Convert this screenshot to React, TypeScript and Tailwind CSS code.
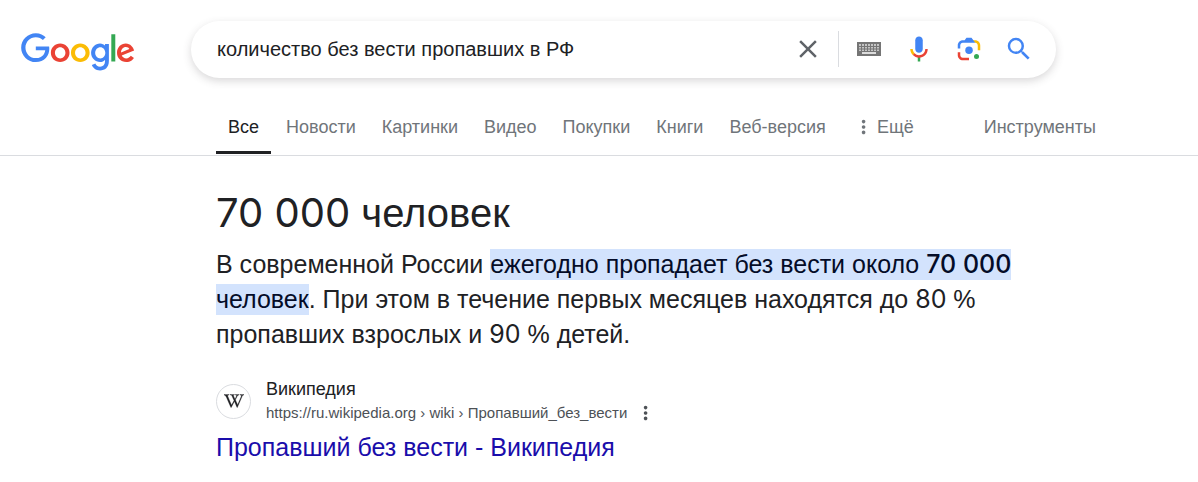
import { useState } from "react";
import type { ReactNode } from "react";
import { FaWikipediaW } from "react-icons/fa";

function GoogleLogo() {
  return (
    <svg viewBox="0 0 272 92" className="block w-[114px]" aria-hidden="true">
      <path fill="#EA4335" d="M115.75 47.18c0 12.77-9.99 22.18-22.25 22.18s-22.25-9.41-22.25-22.18C71.25 34.32 81.24 25 93.5 25s22.25 9.32 22.25 22.18zm-9.74 0c0-7.98-5.79-13.44-12.51-13.44S80.99 39.2 80.99 47.18c0 7.9 5.79 13.44 12.51 13.44s12.51-5.55 12.51-13.44z" />
      <path fill="#FBBC05" d="M163.75 47.18c0 12.77-9.99 22.18-22.25 22.18s-22.25-9.41-22.25-22.18c0-12.85 9.99-22.18 22.25-22.18s22.25 9.32 22.25 22.18zm-9.74 0c0-7.98-5.79-13.44-12.51-13.44s-12.51 5.46-12.51 13.44c0 7.9 5.79 13.44 12.51 13.44s12.51-5.55 12.51-13.44z" />
      <path fill="#4285F4" d="M209.75 26.34v39.82c0 16.38-9.66 23.07-21.08 23.07-10.75 0-17.22-7.19-19.66-13.07l8.48-3.53c1.51 3.61 5.21 7.87 11.17 7.87 7.31 0 11.84-4.51 11.84-13v-3.19h-.34c-2.18 2.69-6.38 5.04-11.68 5.04-11.09 0-21.25-9.66-21.25-22.09 0-12.52 10.16-22.26 21.25-22.26 5.29 0 9.49 2.35 11.68 4.96h.34v-3.61h9.25zm-8.56 20.92c0-7.81-5.21-13.52-11.84-13.52-6.72 0-12.35 5.71-12.35 13.52 0 7.73 5.63 13.36 12.35 13.36 6.63 0 11.84-5.63 11.84-13.36z" />
      <path fill="#34A853" d="M225 3v65h-9.5V3h9.5z" />
      <path fill="#EA4335" d="M262.02 54.48l7.56 5.04c-2.44 3.61-8.32 9.83-18.48 9.83-12.6 0-22.01-9.74-22.01-22.18 0-13.19 9.49-22.18 20.92-22.18 11.51 0 17.14 9.16 18.98 14.11l1.01 2.52-29.65 12.28c2.27 4.45 5.8 6.72 10.75 6.72 4.96 0 8.4-2.44 10.92-6.14zm-23.27-7.98l19.82-8.23c-1.09-2.77-4.37-4.7-8.23-4.7-4.95 0-11.84 4.37-11.59 12.93z" />
      <path fill="#4285F4" d="M35.29 41.41V32H67c.31 1.64.47 3.58.47 5.68 0 7.06-1.93 15.79-8.15 22.01-6.05 6.3-13.78 9.66-24.02 9.66C16.32 69.35.36 53.89.36 34.91.36 15.93 16.32.47 35.3.47c10.5 0 17.98 4.12 23.6 9.49l-6.64 6.64c-4.03-3.78-9.49-6.72-16.97-6.72-13.86 0-24.7 11.17-24.7 25.03 0 13.86 10.84 25.03 24.7 25.03 8.99 0 14.11-3.61 17.39-6.89 2.66-2.66 4.41-6.46 5.1-11.65l-22.49.01z" />
    </svg>
  );
}

function ClearIcon() {
  return (
    <svg viewBox="0 0 24 24" className="size-[30px] fill-[#5f6368]" aria-hidden="true">
      <path d="M19 6.41L17.59 5 12 10.59 6.41 5 5 6.41 10.59 12 5 17.59 6.41 19 12 13.41 17.59 19 19 17.59 13.41 12z" />
    </svg>
  );
}

const keyColumns = [2, 5, 8, 11, 14, 17, 20];

function KeyboardIcon() {
  return (
    <svg viewBox="-3 -8 30 30" className="size-[30px]" aria-hidden="true">
      <rect width="24" height="14" fill="#757575" />
      {keyColumns.map((x) => (
        <g key={x} fill="#c4c4c4">
          <rect x={x} y="2" width="2" height="2" />
          <rect x={x} y="5" width="2" height="1.5" />
          <rect x={x} y="7.5" width="2" height="1.5" />
        </g>
      ))}
      <rect x="5" y="10" width="14" height="2" fill="#dcdcdc" />
    </svg>
  );
}

function MicIcon() {
  return (
    <svg viewBox="0 0 24 24" className="size-[30px]" aria-hidden="true">
      <path fill="#4285f4" d="m12 15c1.66 0 3-1.31 3-2.97v-7.02c0-1.66-1.34-3.01-3-3.01s-3 1.34-3 3.01v7.02c0 1.66 1.34 2.97 3 2.97z" />
      <path fill="#34a853" d="m11 18.08h2v3.92h-2z" />
      <path fill="#fbbc04" d="m7.05 16.87c-1.27-1.33-2.05-2.83-2.05-4.87h2c0 1.45 0.56 2.42 1.47 3.38v0.32l-1.15 1.18z" />
      <path fill="#ea4335" d="m12 16.93a4.97 5.25 0 0 1 -3.54 -1.55l-1.41 1.49c1.26 1.34 3.02 2.13 4.95 2.13 3.87 0 6.99-2.92 6.99-7h-1.99c0 2.92-2.24 4.93-5 4.93z" />
    </svg>
  );
}

function LensIcon() {
  return (
    <svg viewBox="0 0 192 192" className="size-[30px]" aria-hidden="true">
      <circle fill="#34a853" cx="144.07" cy="144" r="16" />
      <circle fill="#4285f4" cx="96.07" cy="104" r="24" />
      <path fill="#ea4335" d="M24,135.2c0,18.11,14.69,32.8,32.8,32.8H96v-16l-40.1-0.1c-8.8,0-15.9-8.19-15.9-17.9v-18H24V135.2z" />
      <path fill="#fbbc04" d="M168,72.8c0-18.11-14.69-32.8-32.8-32.8H116l20,16c8.8,0,16,8.29,16,18v30h16V72.8z" />
      <path fill="#4285f4" d="M112,24l-32,0L68,40H56.8C38.69,40,24,54.69,24,72.8V92h16V74c0-9.71,7.2-18,16-18h80L112,24z" />
    </svg>
  );
}

function SearchIcon() {
  return (
    <svg viewBox="0 0 24 24" className="size-[30px] fill-[#4285f4]" aria-hidden="true">
      <path d="M15.5 14h-.79l-.28-.27A6.471 6.471 0 0 0 16 9.5 6.5 6.5 0 1 0 9.5 16c1.61 0 3.09-.59 4.23-1.57l.27.28v.79l5 4.99L20.49 19l-4.99-5zm-6 0C7.01 14 5 11.99 5 9.5S7.01 5 9.5 5 14 7.01 14 9.5 11.99 14 9.5 14z" />
    </svg>
  );
}

function DotsIcon({ className }: { className: string }) {
  return (
    <svg viewBox="8 2 8 20" className={className} aria-hidden="true">
      <path d="M12 8c1.1 0 2-.9 2-2s-.9-2-2-2-2 .9-2 2 .9 2 2 2zm0 2c-1.1 0-2 .9-2 2s.9 2 2 2 2-.9 2-2-.9-2-2-2zm0 6c-1.1 0-2 .9-2 2s.9 2 2 2 2-.9 2-2-.9-2-2-2z" />
    </svg>
  );
}

function Num({ children }: { children: ReactNode }) {
  return <span className="font-[Inter,sans-serif]">{children}</span>;
}

const tabs = ["Новости", "Картинки", "Видео", "Покупки", "Книги", "Веб-версия"];

export default function App() {
  const [query, setQuery] = useState("количество без вести пропавших в РФ");

  return (
    <div className="bg-white font-['Liberation_Sans',Arial,sans-serif] text-[#202124]">
      <header className="border-b border-[#dadce0]">
        <div className="flex items-center pt-[21px] pr-5 pl-[21px]">
          <a href="#home" aria-label="Google" className="mt-[5px] shrink-0">
            <GoogleLogo />
          </a>
          <form
            role="search"
            onSubmit={(e) => e.preventDefault()}
            className="ml-14 flex h-[57px] max-w-[865px] flex-1 items-center rounded-full bg-white pr-[22px] pb-0.5 pl-[26px] shadow-[0_3px_8px_rgba(64,60,67,0.2)]"
          >
            <input
              type="text"
              aria-label="Поиск"
              value={query}
              onChange={(e) => setQuery(e.target.value)}
              className="min-w-0 flex-1 bg-transparent text-[20px] leading-7 outline-none"
            />
            <button type="button" aria-label="Очистить" onClick={() => setQuery("")}>
              <ClearIcon />
            </button>
            <span className="mx-[15px] h-9 w-px bg-[#dadce0]" />
            <div className="flex items-center gap-5">
              <button type="button" aria-label="Экранная клавиатура">
                <KeyboardIcon />
              </button>
              <button type="button" aria-label="Голосовой поиск">
                <MicIcon />
              </button>
              <button type="button" aria-label="Поиск по картинке">
                <LensIcon />
              </button>
              <button type="submit" aria-label="Найти">
                <SearchIcon />
              </button>
            </div>
          </form>
        </div>
        <nav className="mt-[37px] mb-px flex items-start pl-[216px] text-[18px] leading-6 whitespace-nowrap text-[#70757a]">
          <a href="#all" aria-current="page" className="mr-[15px] border-b-3 border-[#202124] px-3 pb-3 text-[#202124]">
            Все
          </a>
          <div className="flex gap-[26px]">
            {tabs.map((tab) => (
              <a key={tab} href="#tab">
                {tab}
              </a>
            ))}
          </div>
          <button type="button" className="ml-[34px] flex items-center gap-[10px]">
            <DotsIcon className="h-[18px] fill-[#70757a]" />
            Ещё
          </button>
          <button type="button" className="ml-[70px]">
            Инструменты
          </button>
        </nav>
      </header>

      <main className="max-w-[1030px] pt-8 pb-5 pl-[216px]">
        <h1 className="text-[40px] leading-[50px]">
          <Num>70 000</Num> человек
        </h1>
        <p className="mt-[9px] text-[25px] leading-[35px]">
          В современной России{" "}
          <mark className="bg-[#d3e3fd] pt-px pb-0.5 text-[#040c28]">
            ежегодно пропадает без вести около{" "}
            <b className="font-medium">
              <Num>70 000</Num>
            </b>{" "}
            человек
          </mark>
          . При этом в течение первых месяцев находятся до <Num>80</Num> % пропавших взрослых и{" "}
          <Num>90</Num> % детей.
        </p>

        <div className="mt-[25px] flex items-center gap-[15px]">
          <span className="flex size-[35px] shrink-0 items-center justify-center rounded-full border border-[#dadce0]">
            <FaWikipediaW className="size-5 stroke-[#202124] stroke-8 text-[#202124]" aria-hidden="true" />
          </span>
          <div>
            <div className="text-[18px] leading-6">Википедия</div>
            <div className="flex items-center gap-[15px] text-[15px] leading-6 text-[#4d5156]">
              <cite className="not-italic">https://ru.wikipedia.org › wiki › Пропавший_без_вести</cite>
              <button type="button" aria-label="Об этом результате">
                <DotsIcon className="h-[18px] fill-[#4d5156]" />
              </button>
            </div>
          </div>
        </div>
        <h2 className="mt-1.5 text-[25px] leading-8">
          <a href="#wiki" className="text-[#1a0dab]">
            Пропавший без вести - Википедия
          </a>
        </h2>
      </main>
    </div>
  );
}
